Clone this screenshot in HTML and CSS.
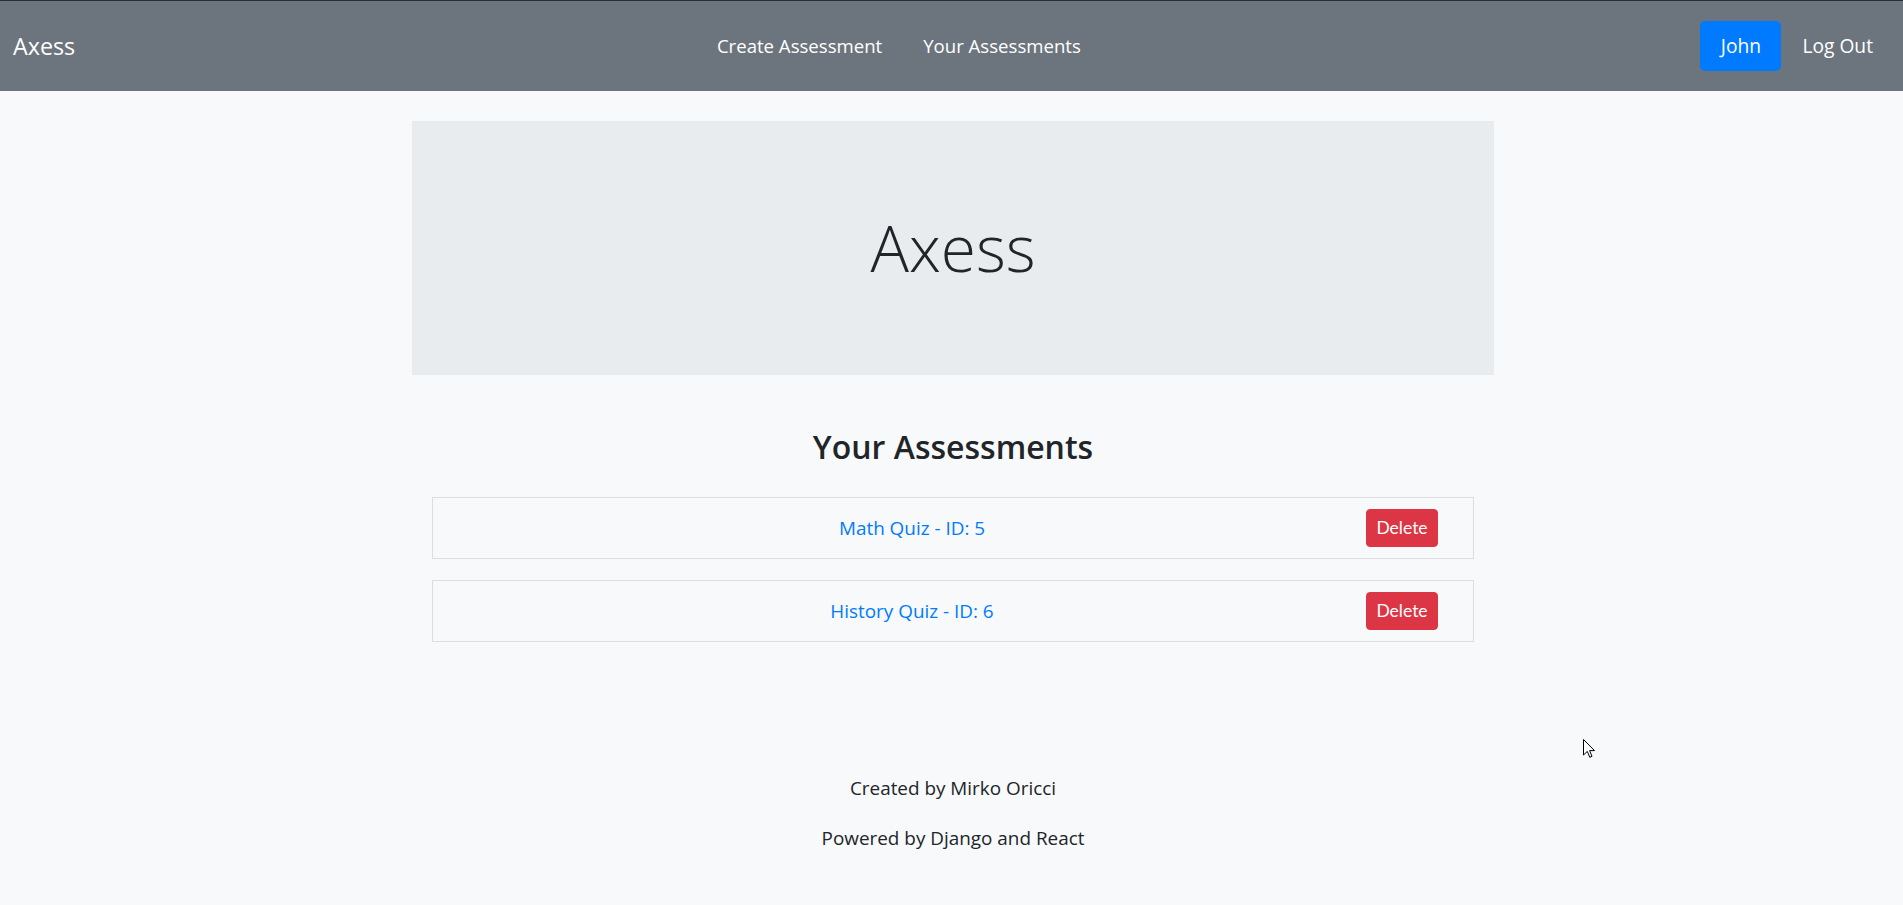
FILE: index.html
```html
<!DOCTYPE html>
<html lang="en">
<head>
<meta charset="utf-8">
<title>Axess</title>
<link rel="stylesheet" href="styles.css">
</head>
<body>
<nav class="navbar">
  <a class="brand" href="#">Axess</a>
  <div class="nav-center">
    <a class="nav-link" href="#">Create Assessment</a>
    <a class="nav-link" href="#">Your Assessments</a>
  </div>
  <div class="nav-right">
    <a class="btn-user" href="#">John</a>
    <a class="nav-link" href="#">Log Out</a>
  </div>
</nav>
<main class="page">
  <section class="jumbotron">
    <h1 class="display">Axess</h1>
  </section>
  <h3 class="section-title">Your Assessments</h3>
  <ul class="list">
    <li class="list-item">
      <div class="item-link"><a href="#">Math Quiz - ID: 5</a></div>
      <button class="btn-delete">Delete</button>
    </li>
    <li class="list-item">
      <div class="item-link"><a href="#">History Quiz - ID: 6</a></div>
      <button class="btn-delete">Delete</button>
    </li>
  </ul>
  <footer class="footer">
    <p>Created by Mirko Oricci</p>
    <p>Powered by Django and React</p>
  </footer>
</main>
<svg class="cursor" width="13" height="20" viewBox="0 0 13 20"><path d="M0.5 0.5 L0.5 16 L4.3 12.4 L6.8 18.3 L9 17.3 L6.6 11.6 L11.5 11.6 Z" fill="#fff" stroke="#000" stroke-width="1"/></svg>
</body>
</html>
```
FILE: styles.css
```css
html, body {
  margin: 0;
  padding: 0;
}
body {
  background: #f8f9fa;
  font-family: "Open Sans", "Noto Sans", sans-serif;
  font-size: 18.9px;
  color: #212529;
  position: relative;
  min-height: 905px;
}
a { text-decoration: none; }

.navbar {
  display: flex;
  align-items: center;
  height: 90px;
  border-top: 1px solid #2b2f33;
  background: #6c757d;
  padding: 0 20px 0 13px;
  font-size: 18.6px;
}
.brand {
  color: #fff;
  font-size: 23.3px;
  margin-right: 22px;
  line-height: 1.5;
}
.nav-center {
  display: flex;
  gap: 21px;
  margin: 0 auto;
}
.nav-link {
  color: #fff;
  padding: 10px;
  line-height: 30px;
}
.nav-right {
  display: flex;
  align-items: center;
  gap: 11px;
}
.nav-right .nav-link {
  font-size: 19.2px;
}
.btn-user {
  display: block;
  background: #007bff;
  color: #fff;
  height: 50px;
  line-height: 50px;
  padding: 0;
  border-radius: 5px;
  box-sizing: border-box;
  width: 81px;
  text-align: center;
  font-size: 19.2px;
}

.page {
  padding-left: 3px;
}
.jumbotron {
  width: 1082px;
  margin: 30px auto 0;
  background: #e9ecef;
  padding: 85px 0 75px;
  box-sizing: border-box;
  height: 254px;
}
.display {
  margin: 0;
  font-weight: 300;
  font-size: 64px;
  line-height: 84px;
  text-align: center;
  color: #212529;
}
.section-title {
  margin: 51px 0 0;
  font-size: 32px;
  font-weight: 600;
  line-height: 42px;
  text-align: center;
}
.list {
  list-style: none;
  margin: 29px auto 0;
  padding: 0;
  width: 1042px;
  display: flex;
  flex-direction: column;
  gap: 21px;
}
.list-item {
  display: flex;
  align-items: center;
  height: 62px;
  box-sizing: border-box;
  border: 1px solid #dcdddf;
  padding: 0 35px 0 25px;
}
.item-link {
  flex: 1;
  text-align: center;
}
.item-link a {
  color: #007bff;
}
.btn-delete {
  font-family: Lato, "Open Sans", sans-serif;
  font-size: 17.5px;
  line-height: 26px;
  height: 38px;
  width: 72px;
  padding: 0;
  background: #dc3545;
  color: #fff;
  border: 1px solid #dc3545;
  border-radius: 4px;
}
.footer {
  margin-top: 131px;
  text-align: center;
}
.footer p {
  margin: 0 0 20px;
  line-height: 30px;
}
.cursor {
  position: absolute;
  left: 1583px;
  top: 739px;
}
```
